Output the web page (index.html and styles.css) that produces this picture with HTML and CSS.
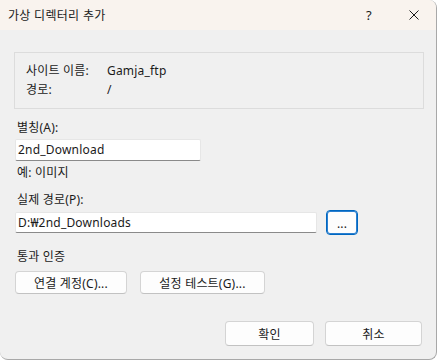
FILE: index.html
```html
<!DOCTYPE html>
<html lang="ko">
<head>
    <meta charset="UTF-8">
    <meta name="viewport" content="width=device-width, initial-scale=1.0">
    <title>가상 디렉터리 추가</title>
    <link rel="stylesheet" href="styles.css">
</head>
<body>
    <div class="janela">
        <div class="barra-titulo">
            <span class="titulo">가상 디렉터리 추가</span>
            <span class="ajuda">?</span>
            <span class="fechar">
                <svg width="10" height="10" viewBox="0 0 10 10">
                    <path d="M0.5 0.5 L9.5 9.5 M9.5 0.5 L0.5 9.5" stroke="#1a1a1a" stroke-width="1" fill="none"/>
                </svg>
            </span>
        </div>

        <div class="conteudo">
            <div class="grupo">
                <div class="linha-info">
                    <span class="rotulo-info">사이트 이름:</span>
                    <span>Gamja_ftp</span>
                </div>
                <div class="linha-info">
                    <span class="rotulo-info">경로:</span>
                    <span>/</span>
                </div>
            </div>

            <p class="rotulo espaco-grupo">별칭(A):</p>
            <div class="campo campo-curto">2nd_Download</div>
            <p class="rotulo exemplo">예: 이미지</p>

            <p class="rotulo espaco-secao">실제 경로(P):</p>
            <div class="linha-caminho">
                <div class="campo campo-longo">D:₩2nd_Downloads</div>
                <button type="button" class="botao botao-procurar">...</button>
            </div>

            <p class="rotulo espaco-auth">통과 인증</p>
            <div class="linha-botoes">
                <button type="button" class="botao botao-conta">연결 계정(C)...</button>
                <button type="button" class="botao botao-teste">설정 테스트(G)...</button>
            </div>

            <div class="rodape">
                <button type="button" class="botao botao-ok">확인</button>
                <button type="button" class="botao botao-cancelar">취소</button>
            </div>
        </div>
    </div>
</body>
</html>
```

FILE: styles.css
```css
* {
    margin: 0;
    padding: 0;
    box-sizing: border-box;
}

body {
    font-family: "Noto Sans", "Noto Sans CJK KR", sans-serif;
    font-size: 12px;
    color: #1a1a1a;
    background-color: #ffffff;
}

.janela {
    width: 437px;
    height: 360px;
    background-color: #f0f0f0;
    border-right: 1px solid #a8a8a8;
    border-bottom: 1px solid #a8a8a8;
    border-radius: 0 8px 8px 8px;
    overflow: hidden;
}

.barra-titulo {
    height: 30px;
    background-color: #f9f3ee;
    display: flex;
    align-items: center;
    padding-left: 8px;
}

.titulo {
    flex: 1;
    font-size: 12px;
    letter-spacing: 0.3px;
}

.ajuda {
    width: 12px;
    margin-right: 31px;
    font-size: 13px;
}

.fechar {
    display: flex;
    margin-right: 17px;
}

.conteudo {
    padding-left: 14px;
    letter-spacing: 0.2px;
}

.grupo {
    margin-top: 22px;
    width: 410px;
    height: 57px;
    border: 1px solid #dcdcdc;
    padding: 8px 0 0 11px;
}

.linha-info {
    display: flex;
    height: 19px;
    line-height: 19px;
}

.rotulo-info {
    width: 81px;
}

.rotulo {
    line-height: 16px;
    padding-left: 3px;
}

.espaco-grupo {
    margin-top: 11px;
}

.exemplo {
    margin-top: 4px;
}

.espaco-secao {
    margin-top: 11px;
}

.espaco-auth {
    margin-top: 14px;
}

.campo {
    height: 22px;
    line-height: 20px;
    padding-left: 2px;
    background-color: #ffffff;
    border: 1px solid #e6e6e6;
    border-bottom-color: #8a8a8a;
    border-radius: 2px;
    margin-left: 1px;
}

.campo-curto {
    width: 186px;
    margin-top: 3px;
}

.linha-caminho {
    display: flex;
    align-items: center;
    gap: 9px;
    margin-top: 2px;
}

.campo-longo {
    width: 302px;
    height: 21px;
    line-height: 19px;
}

.botao {
    font-family: inherit;
    font-size: 12px;
    letter-spacing: 0.2px;
    color: #1a1a1a;
    background-color: #fdfdfd;
    border: 1px solid #d4d4d4;
    border-bottom-color: #c2c2c2;
    border-radius: 4px;
    cursor: pointer;
}

.botao-procurar {
    width: 32px;
    height: 25px;
    border: 1px solid #0067c0;
    box-shadow: inset 0 0 0 1px #2a7fd0;
    line-height: 18px;
    padding-top: 2px;
}

.linha-botoes {
    display: flex;
    gap: 13px;
    margin-top: 6px;
    padding-left: 1px;
}

.botao-conta {
    width: 112px;
    height: 23px;
}

.botao-teste {
    width: 125px;
    height: 23px;
}

.rodape {
    display: flex;
    justify-content: flex-end;
    gap: 11px;
    margin-top: 27px;
    padding-right: 14px;
}

.botao-ok {
    width: 89px;
    height: 25px;
}

.botao-cancelar {
    width: 97px;
    height: 25px;
}
```
